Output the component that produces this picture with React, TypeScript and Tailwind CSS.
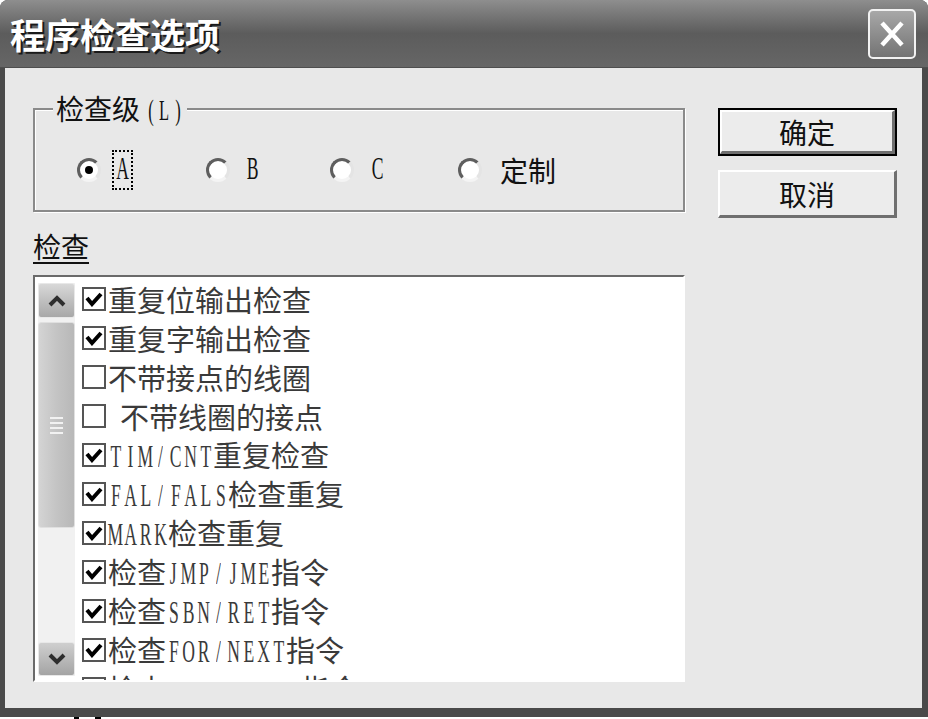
import React from "react";

const CJK = '"Noto Sans CJK SC", "Noto Sans", sans-serif';
const SERIF = '"Liberation Serif", "DejaVu Serif", serif';

function Lat({ children, w = 15, size = 32 }: { children: string; w?: number; size?: number }) {
  return (
    <span style={{ fontFamily: SERIF, fontSize: size }} className="leading-none">
      {children.split("").map((c, i) => (
        <span
          key={i}
          className="inline-flex justify-center"
          style={{ width: w }}
        >
          <span className="inline-block scale-x-[0.55]">{c}</span>
        </span>
      ))}
    </span>
  );
}

function Radio({ checked }: { checked?: boolean }) {
  return (
    <div className="w-[24px] h-[24px] rounded-full border-[3px] border-t-[#5e5e5e] border-l-[#5e5e5e] border-r-[#e4e4e4] border-b-[#f4f4f4] bg-white flex items-center justify-center shrink-0">
      {checked && <div className="w-[8px] h-[8px] rounded-full bg-black" />}
    </div>
  );
}

function Check({ checked }: { checked: boolean }) {
  return (
    <div className="w-[24px] h-[24px] border-2 border-[#555] bg-white flex items-center justify-center shrink-0">
      {checked && (
        <svg width="18" height="16" viewBox="0 0 18 16">
          <path d="M2 7 L7 13 L16 3" fill="none" stroke="#000" strokeWidth="4" />
        </svg>
      )}
    </div>
  );
}

const items: { checked: boolean; text: React.ReactNode; indent?: boolean }[] = [
  { checked: true, text: <>重复位输出检查</> },
  { checked: true, text: <>重复字输出检查</> },
  { checked: false, text: <>不带接点的线圈</> },
  { checked: false, text: <>不带线圈的接点</>, indent: true },
  { checked: true, text: <><Lat>TIM/CNT</Lat>重复检查</> },
  { checked: true, text: <><Lat>FAL/FALS</Lat>检查重复</> },
  { checked: true, text: <><Lat>MARK</Lat>检查重复</> },
  { checked: true, text: <>检查<Lat>JMP/JME</Lat>指令</> },
  { checked: true, text: <>检查<Lat>SBN/RET</Lat>指令</> },
  { checked: true, text: <>检查<Lat>FOR/NEXT</Lat>指令</> },
  { checked: true, text: <>检查<Lat>CALL/SRET</Lat>指令</> },
];

function Btn({ label, isDefault }: { label: string; isDefault?: boolean }) {
  return (
    <div
      className={
        "w-[179px] h-[48px] " + (isDefault ? "border-2 border-black" : "")
      }
    >
      <div className="w-full h-full bg-[#ececec] border-t-2 border-l-2 border-t-white border-l-white border-b-[3px] border-r-[3px] border-b-[#6f6f6f] border-r-[#6f6f6f] flex items-center justify-center text-[28px] text-[#111] leading-none">
        {label}
      </div>
    </div>
  );
}

export default function App() {
  return (
    <div className="w-[928px] h-[719px] bg-white overflow-hidden" style={{ fontFamily: CJK }}>
      <div className="w-[928px] h-[717px] flex flex-col rounded-t-[8px] bg-[#4a4a4a] overflow-hidden">
        {/* Title bar */}
        <div className="h-[68px] shrink-0 flex items-center justify-between pl-[10px] pr-[12px] bg-gradient-to-b from-[#8e8e8e] via-[#5c5c5c] to-[#666666] border-b border-[#4e4e4e]">
          <div
            className="text-white font-bold text-[35px] leading-none"
            style={{ textShadow: "2px 2px 0 #1a1a1a" }}
          >
            程序检查选项
          </div>
          <div className="w-[48px] h-[50px] rounded-[5px] border-2 border-[#f2f2f2] bg-gradient-to-b from-[#a8a8a8] to-[#747474] flex items-center justify-center">
            <svg width="30" height="32" viewBox="0 0 30 32">
              <path d="M5 5 L25 27 M25 5 L5 27" stroke="#ffffff" strokeWidth="4.5" />
            </svg>
          </div>
        </div>

        {/* Body */}
        <div className="flex-1 ml-[5px] mr-[6px] mb-[9px] bg-[#e8e8e8] flex pl-[28px] pt-[40px]">
          {/* Left column */}
          <div className="w-[652px] flex flex-col">
            {/* Group box */}
            <div className="relative h-[104px] border-2 border-[#8a8a8a] shadow-[inset_1px_1px_0_#ffffff,1px_1px_0_#ffffff]">
              <div className="absolute left-[18px] top-[-19px] px-[3px] bg-[#e8e8e8] text-[28px] leading-[34px] text-[#111]">
                检查级
                <span className="ml-[4px]">
                  <Lat w={13} size={30}>(</Lat>
                  <span className="underline underline-offset-[2px]"><Lat w={14} size={30}>L</Lat></span>
                  <Lat w={13} size={30}>)</Lat>
                </span>
              </div>
              <div className="flex items-center pl-[42px] pt-[40px]">
                <div className="w-[129px] flex items-center">
                  <Radio checked />
                  <div className="ml-[11px] border-2 border-dotted border-black leading-[32px] text-[#111]">
                    <Lat w={17}>A</Lat>
                  </div>
                </div>
                <div className="w-[124px] flex items-center">
                  <Radio />
                  <div className="ml-[15px] leading-[32px] text-[#111]">
                    <Lat>B</Lat>
                  </div>
                </div>
                <div className="w-[128px] flex items-center">
                  <Radio />
                  <div className="ml-[16px] leading-[32px] text-[#111]">
                    <Lat>C</Lat>
                  </div>
                </div>
                <div className="flex items-center">
                  <Radio />
                  <div className="ml-[18px] text-[28px] leading-[32px] text-[#111]">定制</div>
                </div>
              </div>
            </div>

            {/* Label */}
            <div className="mt-[16px] h-[47px] text-[28px] leading-[36px] text-[#111]">
              <span className="underline underline-offset-[4px]">检查</span>
            </div>

            {/* List box */}
            <div className="h-[407px] border-t-2 border-l-2 border-t-[#6a6a6a] border-l-[#6a6a6a] border-b-2 border-r-2 border-b-white border-r-white bg-white flex overflow-hidden">
              {/* Scrollbar */}
              <div className="w-[37px] ml-[3px] mt-[6px] mb-[4px] flex flex-col bg-[#f1f1f1] shrink-0">
                <div className="h-[35px] rounded-[3px] border border-[#e8e8e8] bg-gradient-to-b from-[#d8d8d8] to-[#a8a8a8] flex items-center justify-center">
                  <svg width="20" height="14" viewBox="0 0 20 14">
                    <path d="M3 11 L10 4 L17 11" fill="none" stroke="#2e2e2e" strokeWidth="4" />
                  </svg>
                </div>
                <div className="h-[4px]" />
                <div className="h-[206px] rounded-[3px] border border-[#e0e0e0] bg-gradient-to-r from-[#d4d4d4] via-[#c4c4c4] to-[#b8b8b8] flex flex-col items-center justify-center gap-[3px]">
                  <div className="w-[13px] h-[2px] bg-[#f2f2f2]" />
                  <div className="w-[13px] h-[2px] bg-[#f2f2f2]" />
                  <div className="w-[13px] h-[2px] bg-[#f2f2f2]" />
                  <div className="w-[13px] h-[2px] bg-[#f2f2f2]" />
                </div>
                <div className="flex-1" />
                <div className="h-[34px] rounded-[3px] border border-[#e8e8e8] bg-gradient-to-b from-[#cfcfcf] to-[#a4a4a4] flex items-center justify-center">
                  <svg width="20" height="14" viewBox="0 0 20 14">
                    <path d="M3 3 L10 10 L17 3" fill="none" stroke="#2e2e2e" strokeWidth="4" />
                  </svg>
                </div>
              </div>

              {/* Items */}
              <div className="flex flex-col pt-[2px] pl-[7px]">
                {items.map((it, i) => (
                  <div key={i} className="h-[39px] shrink-0 flex items-center">
                    <Check checked={it.checked} />
                    <div
                      className={
                        "text-[29px] leading-[34px] text-[#3a3a3a] whitespace-nowrap " +
                        (it.indent ? "ml-[14px]" : "ml-[2px]")
                      }
                    >
                      {it.text}
                    </div>
                  </div>
                ))}
              </div>
            </div>
          </div>

          {/* Right column */}
          <div className="ml-[33px] flex flex-col gap-[14px]">
            <Btn label="确定" isDefault />
            <Btn label="取消" />
          </div>
        </div>
      </div>
      <div className="h-[2px] flex pl-[74px] gap-[16px]">
        <div className="w-[5px] h-[2px] bg-black" />
        <div className="w-[6px] h-[2px] bg-black" />
      </div>
    </div>
  );
}
